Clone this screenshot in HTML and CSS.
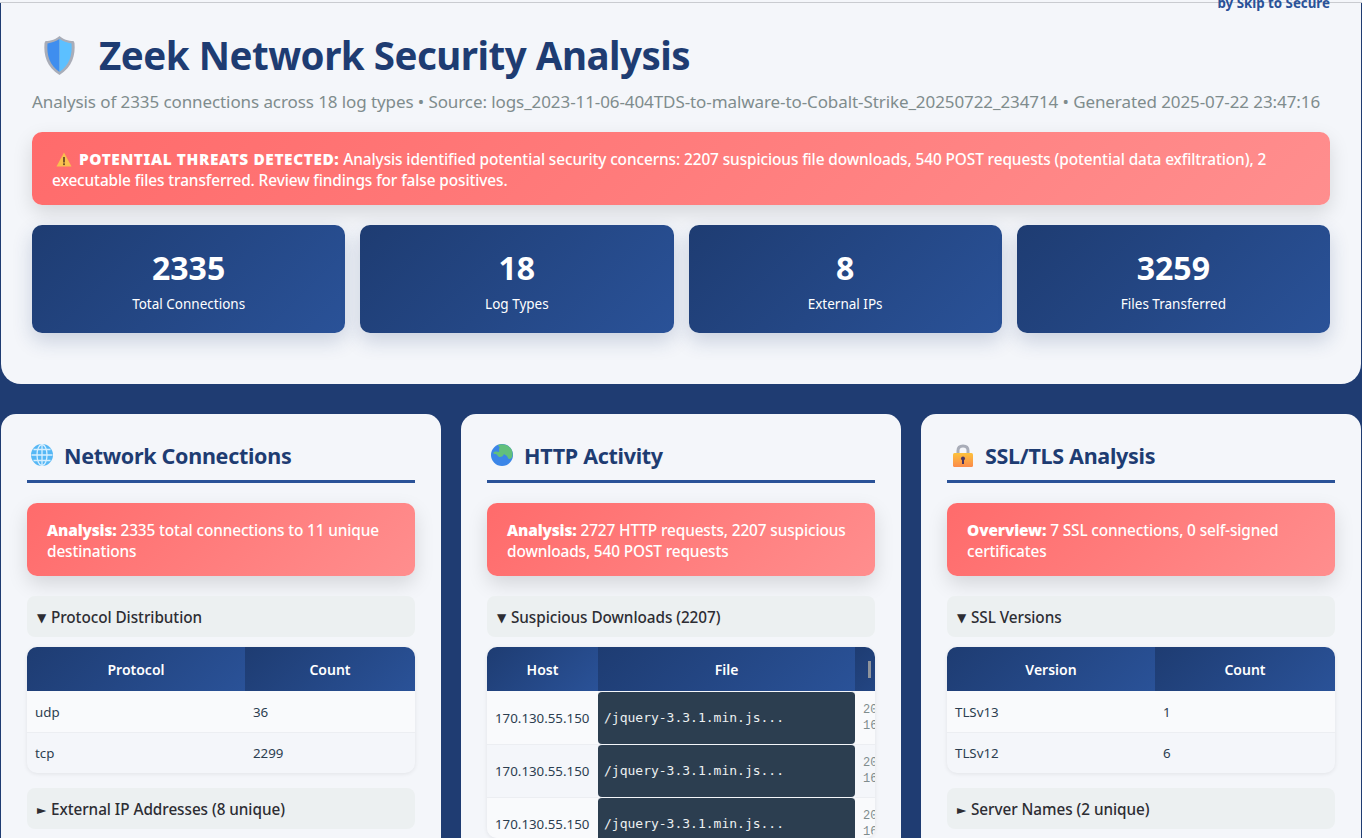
FILE: index.html
```html
<!DOCTYPE html>
<html lang="en">
<head>
    <meta charset="UTF-8">
    <meta name="viewport" content="width=device-width, initial-scale=1.0">
    <title>Zeek Network Security Analysis</title>
    <link rel="stylesheet" href="styles.css">
</head>
<body>
    <div class="topline"></div>
    <header class="header">
        <div class="credit">by Skip to Secure</div>
        <h1 class="title">
            <svg class="shield" viewBox="0 0 32 41">
                <path d="M16 1 C19 4 25 6 30 6 L31 8 C32 20 29 32 16 40 C3 32 0 20 1 8 L2 6 C7 6 13 4 16 1Z" fill="#a9adb8"/>
                <path d="M16 4 C13 6 8 8 4 8.500 C3 20 6 30 16 37Z" fill="#3f8eef"/>
                <path d="M16 4 C19 6 24 8 28 8.500 C29 20 26 30 16 37Z" fill="#5cc0ff"/>
            </svg>
            <span>Zeek Network Security Analysis</span>
        </h1>
        <p class="subtitle">Analysis of 2335 connections across 18 log types • Source: logs_2023-11-06-404TDS-to-malware-to-Cobalt-Strike_20250722_234714 • Generated 2025-07-22 23:47:16</p>
        <div class="threat">
            <svg class="warn" viewBox="0 0 16 15">
                <path d="M8 .5 L15.500 14.500 H.5Z" fill="#f9c04e"/>
                <rect x="7.100" y="5" width="1.800" height="5.500" fill="#6b4a2a"/>
                <rect x="7.100" y="11.300" width="1.800" height="1.800" fill="#6b4a2a"/>
            </svg>
            <strong>POTENTIAL THREATS DETECTED:</strong> Analysis identified potential security concerns: 2207 suspicious file downloads, 540 POST requests (potential data exfiltration), 2 executable files transferred. Review findings for false positives.
        </div>
        <div class="stats">
            <div class="stat"><div class="stat-num">2335</div><div class="stat-label">Total Connections</div></div>
            <div class="stat"><div class="stat-num">18</div><div class="stat-label">Log Types</div></div>
            <div class="stat"><div class="stat-num">8</div><div class="stat-label">External IPs</div></div>
            <div class="stat"><div class="stat-num">3259</div><div class="stat-label">Files Transferred</div></div>
        </div>
    </header>

    <main class="panels">
        <section class="panel">
            <h2 class="panel-title">
                <svg class="icon" viewBox="0 0 22 22">
                    <circle cx="11" cy="11" r="11" fill="#55b7f5"/>
                    <g fill="none" stroke="#d6efff" stroke-width="1.300">
                        <ellipse cx="11" cy="11" rx="5" ry="10.500"/>
                        <path d="M11 .5 V21.500 M.5 11 H21.500 M2.500 5.500 H19.500 M2.500 16.500 H19.500"/>
                    </g>
                </svg>
                <span>Network Connections</span>
            </h2>
            <div class="analysis"><strong>Analysis:</strong> 2335 total connections to 11 unique destinations</div>
            <div class="toggle"><span class="arrow">▼</span> Protocol Distribution</div>
            <div class="table-wrap">
                <table class="data">
                    <colgroup><col class="col-a"><col></colgroup>
                    <thead><tr><th>Protocol</th><th>Count</th></tr></thead>
                    <tbody>
                        <tr><td>udp</td><td>36</td></tr>
                        <tr><td>tcp</td><td>2299</td></tr>
                    </tbody>
                </table>
            </div>
            <div class="toggle closed"><span class="arrow">►</span> External IP Addresses (8 unique)</div>
        </section>

        <section class="panel">
            <h2 class="panel-title">
                <svg class="icon" viewBox="0 0 22 22">
                    <circle cx="11" cy="11" r="11" fill="#3b86e8"/>
                    <path d="M7 1 C11 -.5 17 .5 20 4.500 C22 8 22 12 20.500 14 C19 16 17 15 16.500 13 C16 11 14 11.500 13 10 C12 12 10.500 13.500 8 13 C6.500 12 6 10 4.500 10 C3 10 2 9.500 2.500 8.500 C4 7 6.500 7.500 8 8 C9 6.500 7 5.500 8.500 4 C9 3 7.500 2.500 7 1Z" fill="#62c07c"/>
                </svg>
                <span>HTTP Activity</span>
            </h2>
            <div class="analysis"><strong>Analysis:</strong> 2727 HTTP requests, 2207 suspicious downloads, 540 POST requests</div>
            <div class="toggle"><span class="arrow">▼</span> Suspicious Downloads (2207)</div>
            <div class="table-wrap scroll">
                <table class="data wide">
                    <colgroup><col class="col-host"><col class="col-file"><col class="col-time"></colgroup>
                    <thead><tr><th>Host</th><th>File</th><th><span class="grip"></span></th></tr></thead>
                    <tbody>
                        <tr><td class="host">170.130.55.150</td><td class="file">/jquery-3.3.1.min.js...</td><td class="time">2023-11-06<br>16:10:42</td></tr>
                        <tr><td class="host">170.130.55.150</td><td class="file">/jquery-3.3.1.min.js...</td><td class="time">2023-11-06<br>16:10:42</td></tr>
                        <tr><td class="host">170.130.55.150</td><td class="file">/jquery-3.3.1.min.js...</td><td class="time">2023-11-06<br>16:10:42</td></tr>
                    </tbody>
                </table>
            </div>
        </section>

        <section class="panel">
            <h2 class="panel-title">
                <svg class="icon lock" viewBox="0 0 20 23">
                    <path d="M5 10 V6.500 C5 3.500 7 2 10 2 C13 2 15 3.500 15 6.500 V10" fill="none" stroke="#a9adb8" stroke-width="3"/>
                    <rect y="9" width="20" height="14" rx="1.500" fill="url(#lockfill)"/>
                    <circle cx="10" cy="14.500" r="2" fill="#4a3560"/>
                    <rect x="9" y="15" width="2" height="5" fill="#4a3560"/>
                    <defs>
                        <linearGradient id="lockfill" x1="0" y1="0" x2="0" y2="1">
                            <stop offset="0" stop-color="#fdc23c"/>
                            <stop offset="1" stop-color="#fb8a4b"/>
                        </linearGradient>
                    </defs>
                </svg>
                <span>SSL/TLS Analysis</span>
            </h2>
            <div class="analysis"><strong>Overview:</strong> 7 SSL connections, 0 self-signed certificates</div>
            <div class="toggle"><span class="arrow">▼</span> SSL Versions</div>
            <div class="table-wrap">
                <table class="data">
                    <colgroup><col class="col-b"><col></colgroup>
                    <thead><tr><th>Version</th><th>Count</th></tr></thead>
                    <tbody>
                        <tr><td>TLSv13</td><td>1</td></tr>
                        <tr><td>TLSv12</td><td>6</td></tr>
                    </tbody>
                </table>
            </div>
            <div class="toggle closed"><span class="arrow">►</span> Server Names (2 unique)</div>
        </section>
    </main>
</body>
</html>
```

FILE: styles.css
```css
html, body {
    height: 838px;
    overflow: hidden;
}
body {
    margin: 0;
    background: #1f3c72;
    font-family: "Noto Sans", "Open Sans", sans-serif;
    color: #2c3e50;
}
.topline {
    height: 2px;
    background: #f4f6fa;
    border-bottom: 1px solid #c9cbd0;
}
.header {
    position: relative;
    margin: 0 1px;
    height: 381px;
    box-sizing: border-box;
    padding: 27px 31px 0;
    background: #f4f6fa;
    border-radius: 0 0 20px 20px;
}
.credit {
    position: absolute;
    top: -8px;
    right: 31px;
    font-size: 13.300px;
    font-weight: 700;
    line-height: 17px;
    color: #2a5298;
}
.title {
    display: flex;
    align-items: center;
    gap: 23px;
    margin: 0 0 0 11px;
    font-size: 38.500px;
    line-height: 50px;
    font-weight: 700;
    letter-spacing: -0.5px;
    color: #1e3c72;
}
.shield {
    width: 33px;
    height: 41px;
    flex: none;
}
.subtitle {
    margin: 10px 0 0;
    font-size: 17px;
    line-height: 24px;
    letter-spacing: -0.09px;
    color: #7f8c8d;
    white-space: nowrap;
}
.threat {
    margin-top: 18px;
    padding: 17px 20px;
    height: 73px;
    box-sizing: border-box;
    border-radius: 10px;
    background: linear-gradient(135deg, #ff6b6b, #ff8e8e);
    box-shadow: 0 8px 20px rgba(0, 0, 0, 0.13);
    color: #fff;
    font-size: 15.400px;
    line-height: 21px;
    font-weight: 500;
    letter-spacing: -0.1px;
}
.threat strong {
    font-weight: 900;
    letter-spacing: 0.6px;
}
.analysis strong {
    font-weight: 900;
}
.warn {
    width: 16px;
    height: 15px;
    margin: 0 3px 0 4px;
    vertical-align: -2px;
}
.stats {
    display: grid;
    grid-template-columns: repeat(4, 1fr);
    gap: 15px;
    margin-top: 20px;
}
.stat {
    height: 108px;
    box-sizing: border-box;
    padding-top: 22px;
    text-align: center;
    border-radius: 10px;
    background: linear-gradient(135deg, #1e3c72, #2a5298);
    box-shadow: 0 8px 20px rgba(30, 60, 114, 0.2);
    color: #fff;
}
.stat-num {
    font-size: 32px;
    line-height: 42px;
    font-weight: 700;
}
.stat-label {
    margin-top: 6px;
    font-size: 13.500px;
    line-height: 18px;
}
.panels {
    display: grid;
    grid-template-columns: repeat(3, minmax(0, 1fr));
    gap: 20px;
    margin: 30px 1px 0;
}
.panel {
    height: 424px;
    box-sizing: border-box;
    padding: 24px 26px 0;
    overflow: hidden;
    background: #f4f6fa;
    border-radius: 15px 15px 0 0;
}
.panel-title {
    display: flex;
    align-items: center;
    gap: 11px;
    height: 45px;
    box-sizing: border-box;
    margin: 0 0 20px;
    padding: 0 0 8px 4px;
    border-bottom: 3px solid #2a5298;
    font-size: 21.500px;
    font-weight: 700;
    letter-spacing: -0.3px;
    color: #1e3c72;
}
.icon {
    width: 22px;
    height: 22px;
    flex: none;
}
.lock {
    width: 20px;
    height: 23px;
    margin: 0 1px 0 2px;
}
.analysis {
    height: 73px;
    box-sizing: border-box;
    padding: 17px 20px;
    border-radius: 10px;
    background: linear-gradient(135deg, #ff6b6b, #ff8e8e);
    box-shadow: 0 8px 20px rgba(0, 0, 0, 0.13);
    color: #fff;
    font-size: 15.400px;
    line-height: 21px;
    font-weight: 500;
    letter-spacing: -0.13px;
}
.toggle {
    height: 41px;
    box-sizing: border-box;
    margin-top: 20px;
    padding: 0 10px;
    border-radius: 8px;
    background: #ecf0f1;
    color: #2d2d33;
    font-size: 15.300px;
    font-weight: 500;
    letter-spacing: -0.05px;
    line-height: 43px;
}
.toggle.closed {
    margin-top: 15px;
}
.arrow {
    display: inline-block;
    width: 10px;
    font-family: "DejaVu Sans", sans-serif;
    font-size: 12px;
    line-height: 1;
    vertical-align: 1px;
}
.table-wrap {
    height: 126px;
    margin-top: 10px;
    border-radius: 10px;
    overflow: hidden;
    background: #f4f6fa;
    box-shadow: 0 1px 4px rgba(0, 0, 0, 0.08);
}
.table-wrap.scroll {
    height: 191px;
}
.data {
    width: 100%;
    table-layout: fixed;
    border-collapse: separate;
    border-spacing: 0;
    font-size: 13.300px;
}
.data th {
    height: 44px;
    padding: 0 8px;
    background: linear-gradient(135deg, #1e3c72, #2a5298);
    color: #fff;
    font-size: 14px;
    font-weight: 600;
    text-align: center;
}
.data td {
    height: 41px;
    box-sizing: border-box;
    padding: 0 8px;
    border-top: 1px solid #eceef2;
    color: #2c3e50;
}
.data tbody tr:nth-child(odd) {
    background: #f9fafc;
}
.data tbody tr:first-child td {
    border-top: 0;
}
.col-a {
    width: 218px;
}
.col-b {
    width: 208px;
}
.col-host {
    width: 111px;
}
.col-file {
    width: 257px;
}
.col-time {
    width: 100px;
}
.data.wide {
    width: 468px;
}
.data.wide td {
    height: 53px;
}
.data.wide td.host {
    white-space: nowrap;
}
.data.wide td.file {
    padding: 0 6px 2px;
    background: #2c3e50;
    border-radius: 4px;
    border-top: 1px solid #f4f6fa;
    color: #ecf0f1;
    font-family: "DejaVu Sans Mono", monospace;
    font-size: 13px;
}
.data.wide td.time {
    color: #7f8c8d;
    font-size: 12px;
    line-height: 16px;
    font-family: "Liberation Mono", monospace;
    white-space: nowrap;
}
.grip {
    display: block;
    width: 3px;
    height: 17px;
    margin-left: 5px;
    background: #8f949c;
}
```
